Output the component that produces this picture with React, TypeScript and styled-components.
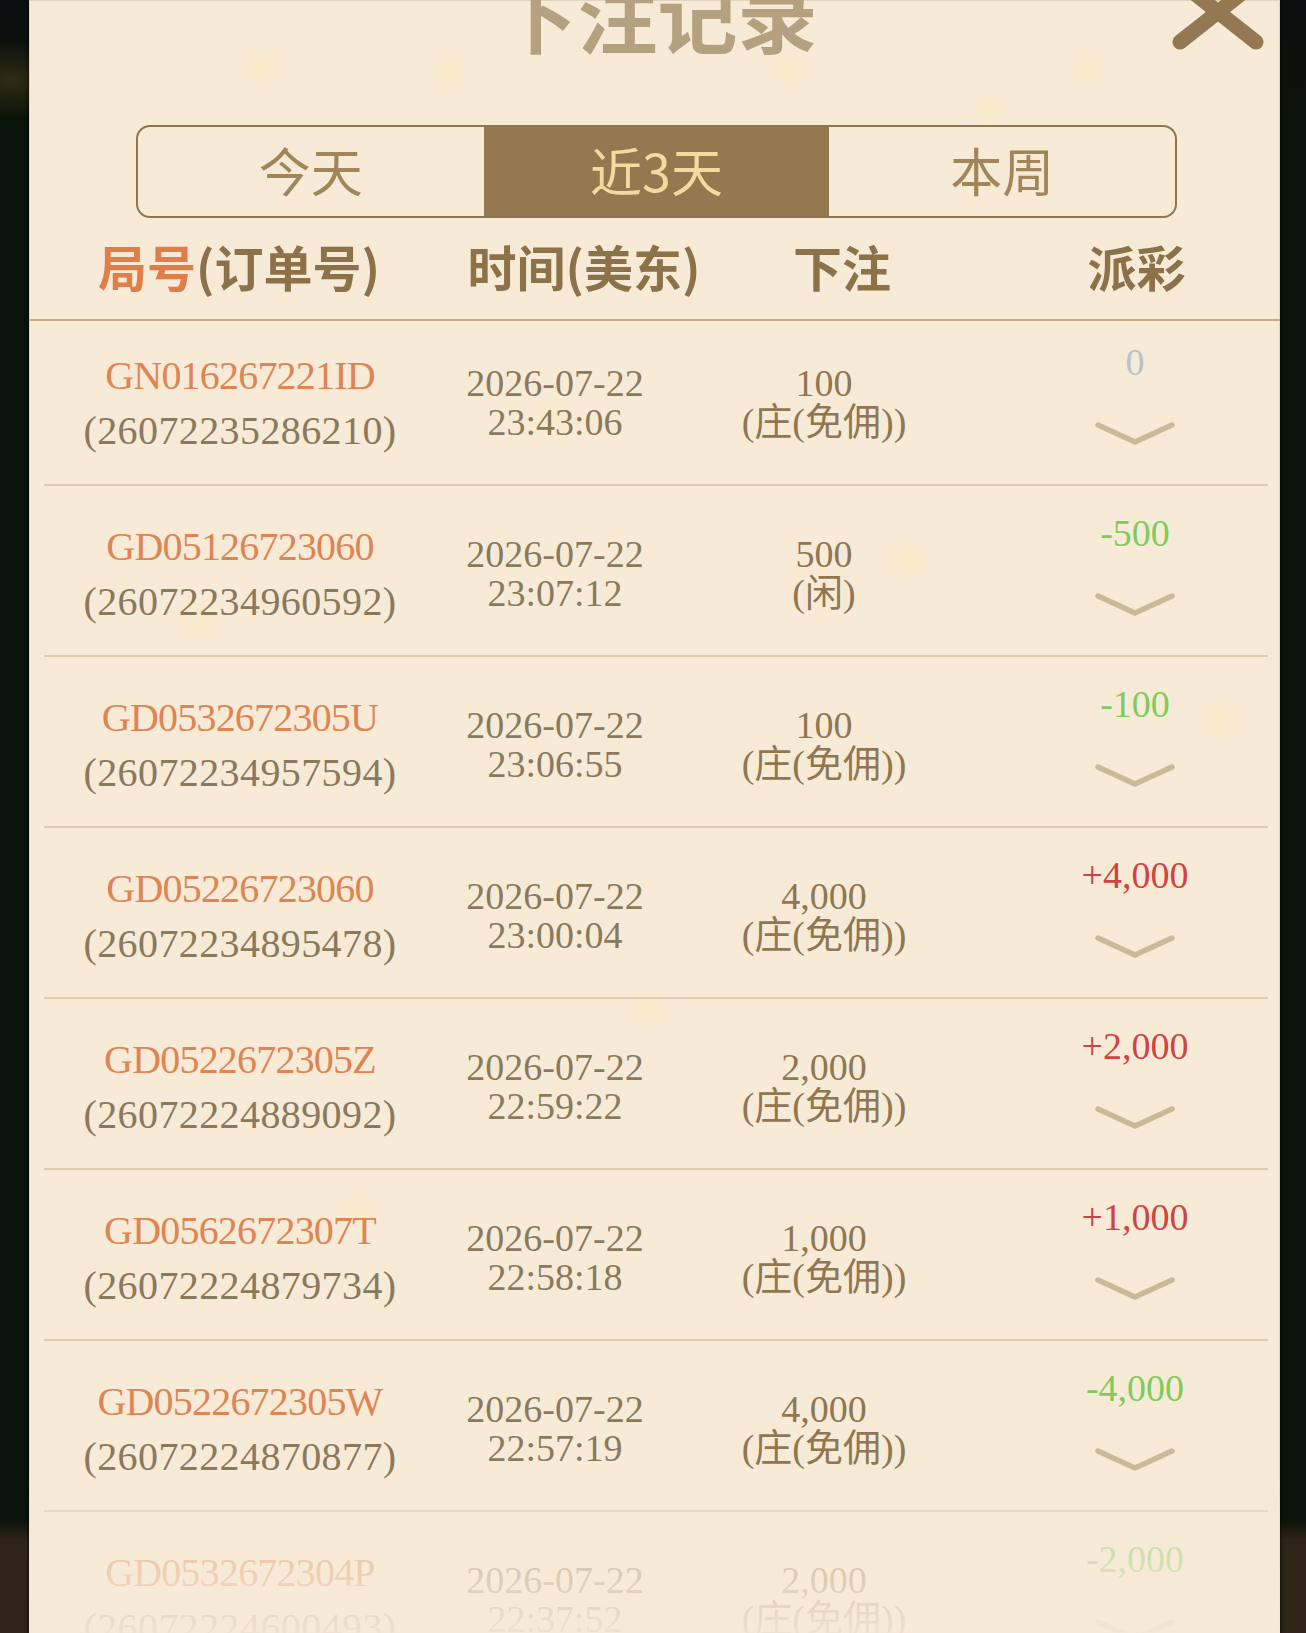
import React from 'react';
import styled, { createGlobalStyle } from 'styled-components';

const GlobalStyle = createGlobalStyle`
  html, body {
    margin: 0;
    padding: 0;
    background: #0a1309;
  }
  * {
    box-sizing: border-box;
  }
`;

type Bet = {
  game: string;
  order: string;
  date: string;
  time: string;
  amount: string;
  side: string;
  payout: string;
};

const bets: Bet[] = [
  { game: 'GN016267221ID', order: '(26072235286210)', date: '2026-07-22', time: '23:43:06', amount: '100', side: '(庄(免佣))', payout: '0' },
  { game: 'GD05126723060', order: '(26072234960592)', date: '2026-07-22', time: '23:07:12', amount: '500', side: '(闲)', payout: '-500' },
  { game: 'GD0532672305U', order: '(26072234957594)', date: '2026-07-22', time: '23:06:55', amount: '100', side: '(庄(免佣))', payout: '-100' },
  { game: 'GD05226723060', order: '(26072234895478)', date: '2026-07-22', time: '23:00:04', amount: '4,000', side: '(庄(免佣))', payout: '+4,000' },
  { game: 'GD0522672305Z', order: '(26072224889092)', date: '2026-07-22', time: '22:59:22', amount: '2,000', side: '(庄(免佣))', payout: '+2,000' },
  { game: 'GD0562672307T', order: '(26072224879734)', date: '2026-07-22', time: '22:58:18', amount: '1,000', side: '(庄(免佣))', payout: '+1,000' },
  { game: 'GD0522672305W', order: '(26072224870877)', date: '2026-07-22', time: '22:57:19', amount: '4,000', side: '(庄(免佣))', payout: '-4,000' },
  { game: 'GD0532672304P', order: '(26072224600493)', date: '2026-07-22', time: '22:37:52', amount: '2,000', side: '(庄(免佣))', payout: '-2,000' },
];

const tabs = ['今天', '近3天', '本周'];

const payoutTone = (v: string) => (v.startsWith('+') ? 'win' : v.startsWith('-') ? 'lose' : 'even');

const Screen = styled.div`
  height: 1633px;
  overflow: hidden;
  display: flex;
  padding: 0 26px 0 29px;
  background:
    radial-gradient(ellipse 80px 40px at 10px 80px, rgba(90, 75, 30, 0.45), transparent),
    linear-gradient(#0b0f10 0, #0a1309 120px, #0a1309 1520px, #2e2518 1540px, #2e2518 100%);
`;

const Panel = styled.div`
  flex: 1;
  position: relative;
  overflow: hidden;
  display: flex;
  flex-direction: column;
  box-shadow: 0 0 3px 1px rgba(0, 0, 0, 0.6), inset 0 0 0 1px rgba(200, 190, 165, 0.5);
  background:
    radial-gradient(circle at 232px 66px, rgba(255, 236, 170, 0.45), transparent 22px),
    radial-gradient(circle at 420px 72px, rgba(255, 236, 170, 0.4), transparent 20px),
    radial-gradient(circle at 760px 70px, rgba(255, 236, 170, 0.4), transparent 20px),
    radial-gradient(circle at 960px 110px, rgba(255, 236, 170, 0.35), transparent 20px),
    radial-gradient(circle at 1060px 70px, rgba(255, 236, 170, 0.35), transparent 20px),
    radial-gradient(circle at 520px 420px, rgba(255, 236, 170, 0.35), transparent 26px),
    radial-gradient(circle at 170px 620px, rgba(255, 236, 170, 0.35), transparent 26px),
    radial-gradient(circle at 880px 560px, rgba(255, 236, 170, 0.35), transparent 26px),
    radial-gradient(circle at 1190px 720px, rgba(255, 236, 170, 0.35), transparent 26px),
    radial-gradient(circle at 620px 1010px, rgba(255, 236, 170, 0.3), transparent 26px),
    radial-gradient(circle at 330px 1210px, rgba(255, 236, 170, 0.3), transparent 26px),
    #f7ebd8;
  & > * {
    flex-shrink: 0;
  }
`;

const Title = styled.h1`
  margin: -28px 0 0;
  padding-left: 6px;
  height: 80px;
  font-family: 'Noto Sans CJK SC', sans-serif;
  font-size: 80px;
  line-height: 80px;
  font-weight: 700;
  text-align: center;
  color: #b4a17f;
`;

const CloseButton = styled.button`
  position: absolute;
  top: -28px;
  right: 12px;
  width: 100px;
  height: 80px;
  padding: 0;
  border: 0;
  background: none;
  svg {
    display: block;
  }
`;

const TabBar = styled.div`
  margin: 73px 103px 0 107px;
  height: 93px;
  display: grid;
  grid-template-columns: 1fr 1fr 1fr;
  border: 2px solid #8f7650;
  border-radius: 14px;
  overflow: hidden;
`;

const Tab = styled.div<{ $active?: boolean }>`
  display: flex;
  align-items: center;
  justify-content: center;
  padding-bottom: 4px;
  font-family: 'Noto Sans CJK SC', sans-serif;
  font-size: 52px;
  line-height: 1;
  color: ${(p) => (p.$active ? '#f6d99e' : '#a08658')};
  background: ${(p) => (p.$active ? '#937850' : 'transparent')};
`;

const Header = styled.div`
  height: 103px;
  padding-bottom: 6px;
  display: grid;
  grid-template-columns: 420px 270px 246px 1fr;
  align-items: center;
  border-bottom: 2px solid #c6ae87;
  font-family: 'Noto Sans CJK SC', sans-serif;
  font-size: 49px;
  line-height: 1;
  font-weight: 700;
  color: #8c7249;
  text-align: center;
  & > div:last-child {
    padding-left: 28px;
  }
`;

const Accent = styled.span`
  color: #e07d48;
`;

const List = styled.div`
  margin: -6px 12px 0 15px;
`;

const Row = styled.div`
  height: 171px;
  padding-top: 6px;
  display: grid;
  grid-template-columns: 392px 238px 300px 1fr;
  align-items: center;
  border-bottom: 2px solid #dccdb1;
  font-family: 'Liberation Serif', 'Noto Sans CJK SC', serif;
  text-align: center;
`;

const OrderCell = styled.div`
  font-size: 40px;
  line-height: 55px;
  color: #8a7a5d;
`;

const GameId = styled.div`
  color: #de8554;
  letter-spacing: -0.8px;
`;

const OrderNo = styled.div`
  letter-spacing: 0.4px;
`;

const TimeCell = styled.div`
  font-size: 38px;
  line-height: 39px;
  color: #8a7a5d;
`;

const BetCell = styled.div`
  font-size: 38px;
  line-height: 39px;
  color: #8e7752;
`;

const PayoutCell = styled.div`
  align-self: start;
  margin-top: 21px;
  padding-left: 28px;
  display: flex;
  flex-direction: column;
  align-items: center;
`;

const Payout = styled.div<{ $tone: string }>`
  font-size: 38px;
  line-height: 40px;
  color: ${(p) => (p.$tone === 'win' ? '#cf4442' : p.$tone === 'lose' ? '#7fcb5b' : '#b9c2c8')};
`;

const Chevron = styled.svg`
  margin-top: 39px;
  display: block;
`;

const BottomFade = styled.div`
  position: absolute;
  left: 0;
  right: 0;
  bottom: 0;
  height: 165px;
  pointer-events: none;
  background: linear-gradient(
    to bottom,
    rgba(247, 235, 216, 0) 0,
    rgba(247, 235, 216, 0.5) 30%,
    rgba(247, 235, 216, 0.7) 60%,
    rgba(247, 235, 216, 0.92) 100%
  );
`;

function App() {
  return (
    <>
      <GlobalStyle />
      <Screen>
        <Panel>
          <Title>下注记录</Title>
          <CloseButton aria-label="close">
            <svg width="100" height="80" viewBox="0 0 100 80">
              <path d="M12 10 L88 70 M88 10 L12 70" stroke="#937852" strokeWidth="15" strokeLinecap="round" fill="none" />
            </svg>
          </CloseButton>
          <TabBar>
            {tabs.map((t) => (
              <Tab key={t} $active={t === '近3天'}>
                {t}
              </Tab>
            ))}
          </TabBar>
          <Header>
            <div>
              <Accent>局号</Accent>(订单号)
            </div>
            <div>时间(美东)</div>
            <div>下注</div>
            <div>派彩</div>
          </Header>
          <List>
            {bets.map((b) => (
              <Row key={b.order}>
                <OrderCell>
                  <GameId>{b.game}</GameId>
                  <OrderNo>{b.order}</OrderNo>
                </OrderCell>
                <TimeCell>
                  <div>{b.date}</div>
                  <div>{b.time}</div>
                </TimeCell>
                <BetCell>
                  <div>{b.amount}</div>
                  <div>{b.side}</div>
                </BetCell>
                <PayoutCell>
                  <Payout $tone={payoutTone(b.payout)}>{b.payout}</Payout>
                  <Chevron width="80" height="26" viewBox="0 0 80 26">
                    <polyline points="3,4 40,21 77,4" stroke="#c8bb9a" strokeWidth="5.5" fill="none" strokeLinecap="round" strokeLinejoin="round" />
                  </Chevron>
                </PayoutCell>
              </Row>
            ))}
          </List>
          <BottomFade />
        </Panel>
      </Screen>
    </>
  );
}

export default App;
